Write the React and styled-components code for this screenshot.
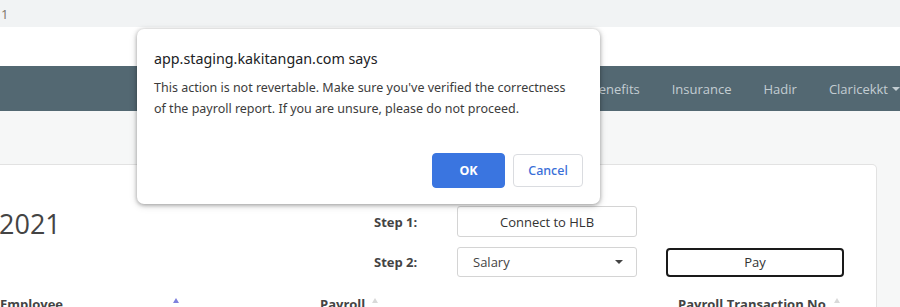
import React from "react";
import styled, { createGlobalStyle } from "styled-components";

const GlobalStyle = createGlobalStyle`
  html, body { margin: 0; padding: 0; }
  body {
    font-family: "Open Sans", "Noto Sans", sans-serif;
    font-size: 13px;
    color: #333;
    background: #f6f7f7;
    overflow: hidden;
  }
`;

const Root = styled.div`
  position: relative;
  width: 900px;
  height: 307px;
  overflow: hidden;
  background: #f6f7f7;
`;

const TabStrip = styled.div`
  height: 27px;
  background: #f1f3f4;
  display: flex;
  align-items: center;
  padding-left: 1px;
  font-size: 13px;
  color: #7d7569;
`;

const WhiteBar = styled.div`
  height: 39px;
  background: #fff;
`;

const Nav = styled.nav`
  height: 45px;
  background: #536872;
  display: flex;
  justify-content: flex-end;
  align-items: center;
`;

const NavItem = styled.a`
  display: flex;
  align-items: center;
  padding: 0 ${(p) => (p.$last ? "0" : "16px")} 0 16px;
  color: #c3cdd2;
  font-size: 13px;
  text-decoration: none;
`;

const Caret = styled.span`
  display: inline-block;
  margin-left: 4px;
  width: 0;
  height: 0;
  border-left: 4px solid transparent;
  border-right: 4px solid transparent;
  border-top: 4px solid ${(p) => p.$color || "#c3cdd2"};
`;

const Page = styled.main`
  padding: 53px 23px 0 0;
`;

const Card = styled.section`
  background: #fff;
  border: 1px solid #e2e2e2;
  border-left: none;
  border-radius: 0 5px 0 0;
  padding-top: 41px;
  height: 200px;
  display: grid;
  grid-template-columns: 374px 83px 180px 29px 178px 1fr;
  grid-auto-rows: auto;
  row-gap: 10px;
  align-items: center;
  align-content: start;
`;

const Title = styled.h1`
  grid-column: 1;
  grid-row: 1;
  margin: 0 0 0 -1px;
  font-weight: 400;
  font-size: 27px;
  line-height: 31px;
  color: #444;
  position: relative;
  top: 2px;
`;

const StepLabel = styled.div`
  grid-column: 2;
  grid-row: ${(p) => p.$row};
  font-weight: 700;
  font-size: 13px;
  color: #444;
`;

const OutlineButton = styled.button`
  grid-column: 3;
  grid-row: 1;
  height: 31px;
  background: #fff;
  border: 1px solid #d4d4d4;
  border-radius: 3px;
  font-family: inherit;
  font-size: 13px;
  color: #333;
  padding: 0;
`;

const Select = styled.div`
  grid-column: 3;
  grid-row: 2;
  height: 30px;
  box-sizing: border-box;
  border: 1px solid #d4d4d4;
  border-radius: 3px;
  display: flex;
  align-items: center;
  justify-content: space-between;
  padding: 0 13px 0 15px;
  font-size: 13px;
  color: #444;
`;

const PayButton = styled.button`
  grid-column: 5;
  grid-row: 2;
  height: 29px;
  background: #fff;
  border: 2px solid #1a1a1a;
  border-radius: 4px;
  font-family: inherit;
  font-size: 13px;
  color: #333;
  padding: 0;
`;

const HeaderRow = styled.div`
  grid-column: 1 / -1;
  margin-top: 8px;
  display: grid;
  grid-template-columns: 320px 358px 1fr;
  font-weight: 700;
  font-size: 13px;
  line-height: 18px;
  color: #444;
`;

const HeaderCell = styled.div`
  display: flex;
  align-items: flex-start;
  gap: ${(p) => p.$gap || 0}px;
`;

const HeaderLabel = styled.span`
  width: ${(p) => (p.$width ? `${p.$width}px` : "auto")};
`;

const SortArrow = styled.span`
  margin-top: 3px;
  width: 0;
  height: 0;
  border-left: 3.5px solid transparent;
  border-right: 3.5px solid transparent;
  border-bottom: 5px solid ${(p) => (p.$active ? "#7f81dd" : "#d9d9d9")};
`;

const Dialog = styled.div`
  position: absolute;
  left: 137px;
  top: 29px;
  width: 463px;
  height: 175px;
  box-sizing: border-box;
  background: #fff;
  border-radius: 7px;
  box-shadow: 0 1px 4px rgba(0, 0, 0, 0.35), 0 2px 8px rgba(0, 0, 0, 0.12);
  padding: 20px 17px 0 17px;
  font-family: "Noto Sans", "Open Sans", sans-serif;
  display: flex;
  flex-direction: column;
`;

const DialogTitle = styled.div`
  font-size: 14.3px;
  line-height: 20px;
  color: #202124;
`;

const DialogMessage = styled.div`
  margin-top: 8px;
  font-size: 12.5px;
  line-height: 21px;
  color: #3c3c3c;
`;

const DialogActions = styled.div`
  margin-top: auto;
  margin-bottom: 16px;
  display: flex;
  justify-content: flex-end;
  align-items: center;
  gap: 8px;
`;

const DialogButton = styled.button`
  box-sizing: border-box;
  height: ${(p) => (p.$primary ? 35 : 33)}px;
  width: ${(p) => (p.$primary ? 73 : 70)}px;
  border-radius: 4px;
  border: 1px solid ${(p) => (p.$primary ? "#3a75e0" : "#dadce0")};
  background: ${(p) => (p.$primary ? "#3a75e0" : "#fff")};
  color: ${(p) => (p.$primary ? "#fff" : "#3a6fd8")};
  font-family: inherit;
  font-size: 12.5px;
  font-weight: ${(p) => (p.$primary ? 700 : 500)};
  padding: 0;
`;

export default function App() {
  return (
    <Root>
      <GlobalStyle />
      <TabStrip>1</TabStrip>
      <WhiteBar />
      <Nav>
        <NavItem>Benefits</NavItem>
        <NavItem>Insurance</NavItem>
        <NavItem>Hadir</NavItem>
        <NavItem $last>
          Claricekkt
          <Caret />
        </NavItem>
      </Nav>
      <Page>
        <Card>
          <Title>2021</Title>
          <StepLabel $row={1}>Step 1:</StepLabel>
          <OutlineButton>Connect to HLB</OutlineButton>
          <StepLabel $row={2}>Step 2:</StepLabel>
          <Select>
            Salary
            <Caret $color="#444" />
          </Select>
          <PayButton>Pay</PayButton>
          <HeaderRow>
            <HeaderCell>
              <HeaderLabel $width={173}>Employee</HeaderLabel>
              <SortArrow $active />
            </HeaderCell>
            <HeaderCell $gap={7}>
              <HeaderLabel>Payroll</HeaderLabel>
              <SortArrow />
            </HeaderCell>
            <HeaderCell $gap={8}>
              <HeaderLabel>Payroll Transaction No</HeaderLabel>
              <SortArrow />
            </HeaderCell>
          </HeaderRow>
        </Card>
      </Page>
      <Dialog>
        <DialogTitle>app.staging.kakitangan.com says</DialogTitle>
        <DialogMessage>
          This action is not revertable. Make sure you've verified the correctness
          <br />
          of the payroll report. If you are unsure, please do not proceed.
        </DialogMessage>
        <DialogActions>
          <DialogButton $primary>OK</DialogButton>
          <DialogButton>Cancel</DialogButton>
        </DialogActions>
      </Dialog>
    </Root>
  );
}
